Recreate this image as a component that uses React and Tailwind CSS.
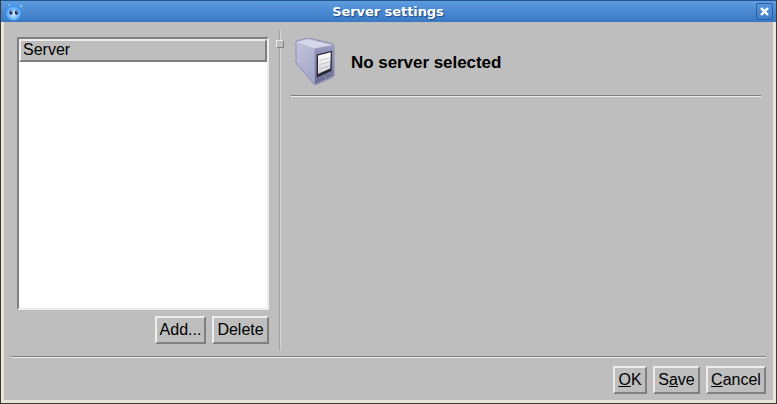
const sans = "font-['Liberation_Sans',Arial,sans-serif]";

function Btn({ width, children }) {
  return (
    <button
      className={`${width} h-[28px] flex items-center justify-center bg-[#bebebe] border-2 border-t-[#ededed] border-l-[#ededed] border-r-[#7f7f7f] border-b-[#7f7f7f] text-[16px] leading-none text-black`}
    >
      {children}
    </button>
  );
}

function AppIcon() {
  return (
    <svg width="20" height="20" viewBox="0 0 20 20">
      <defs>
        <radialGradient id="face" cx="0.5" cy="0.55" r="0.55">
          <stop offset="0" stopColor="#d8ecff" />
          <stop offset="0.55" stopColor="#7cc0ff" />
          <stop offset="1" stopColor="#2f92fa" />
        </radialGradient>
      </defs>
      <circle cx="9.5" cy="11" r="7.6" fill="url(#face)" />
      <circle cx="17" cy="4" r="1.2" fill="#8cc4ff" />
      <circle cx="5" cy="3" r="1" fill="#8cc4ff" />
      <ellipse cx="7" cy="10.5" rx="1.6" ry="2.2" fill="#1c2b52" />
      <ellipse cx="12.5" cy="10.5" rx="1.6" ry="2.2" fill="#1c2b52" />
      <circle cx="7.4" cy="9.6" r="0.6" fill="#fff" />
      <circle cx="12.9" cy="9.6" r="0.6" fill="#fff" />
    </svg>
  );
}

function ServerIcon() {
  return (
    <svg width="42" height="50" viewBox="0 0 42 50" className="shrink-0">
      <defs>
        <linearGradient id="side" x1="0" y1="0" x2="1" y2="1">
          <stop offset="0" stopColor="#c6c8e0" />
          <stop offset="1" stopColor="#9193ba" />
        </linearGradient>
        <linearGradient id="front" x1="0" y1="0" x2="0" y2="1">
          <stop offset="0" stopColor="#9a9cc2" />
          <stop offset="1" stopColor="#66688e" />
        </linearGradient>
        <linearGradient id="panel" x1="0" y1="0" x2="0" y2="1">
          <stop offset="0" stopColor="#ffffff" />
          <stop offset="1" stopColor="#d4d4da" />
        </linearGradient>
      </defs>
      <path d="M1 4 Q1 3 3 2.5 L12 0.5 Q14 0 16 0.5 L37 5.5 Q39 6 39 8 L39 37.5 Q39 38.5 37 39.5 L21 46.5 Q20 47 19 46 L2 26 Q1 25 1 24 Z" fill="url(#side)" stroke="#7b7da6" strokeWidth="0.7" />
      <path d="M2 4 L13 1.5 L38 7 L20 10.5 Z" fill="#d6d8ea" />
      <path d="M19.5 10.5 L38.5 7 L38.5 37.5 L20 46 Z" fill="url(#front)" />
      <path d="M21.7 16.5 L37 12.7 L36.4 33 L21.7 39.5 Z" fill="#262631" />
      <path d="M23 17.5 L35.8 14.2 L35.2 30.5 L23 36 Z" fill="url(#panel)" />
      <path d="M24.5 22.5 L34.5 20 M24.5 26.5 L34.5 24 M24.5 30.5 L34.5 28" stroke="#b0b0ba" strokeWidth="0.7" />
      <circle cx="30" cy="39" r="1" fill="#5fb08a" />
    </svg>
  );
}

export default function App() {
  return (
    <div className={`${sans} w-[777px] h-[404px] flex flex-col bg-[#e9e5d9] border-l border-b border-r border-[#3c3a36] text-black overflow-hidden`}>
      {/* title bar */}
      <div className="h-[22px] shrink-0 -mx-px flex items-center justify-between pl-[4px] pr-[4px] bg-gradient-to-b from-[#5c9ce0] to-[#3a78c4] border-t border-[#23528c]">
        <AppIcon />
        <span className="relative left-[-2px] font-['DejaVu_Sans',sans-serif] font-bold text-[13px] tracking-[-0.005em] text-white [text-shadow:1px_1px_1px_#1f4a80]">Server settings</span>
        <div className="w-[17px] h-[17px] flex items-center justify-center rounded-[2px] border border-[#2b5da0]">
          <svg width="11" height="11" viewBox="0 0 11 11">
            <path d="M2 2 L9 9 M9 2 L2 9" stroke="#fff" strokeWidth="2.4" />
          </svg>
        </div>
      </div>

      {/* window body */}
      <div className="flex-1 ml-[3px] mr-[3px] mb-[3px] bg-[#bebebe] flex flex-col pl-[7px] pr-[6px] min-h-0">
        <div className="flex h-[328px] shrink-0 pt-[8px]">
          {/* left pane */}
          <div className="w-[252px] ml-[6px] flex flex-col shrink-0 pt-[7px]">
            <div className="h-[273px] bg-white border-2 border-t-[#7f7f7f] border-l-[#7f7f7f] border-r-[#ededed] border-b-[#ededed]">
              <div className="h-[23px] flex items-center pl-[2px] pb-[1px] bg-[#bebebe] border-2 border-t-[#ededed] border-l-[#ededed] border-r-[#7f7f7f] border-b-[#7f7f7f] text-[16px] leading-none">
                Server
              </div>
            </div>
            <div className="flex justify-end gap-[6px] mt-[6px]">
              <Btn width="w-[51px]">Add...</Btn>
              <Btn width="w-[57px]">Delete</Btn>
            </div>
          </div>

          {/* splitter */}
          <div className="relative w-[2px] ml-[10px] mr-[10px] h-[320px] shrink-0 bg-gradient-to-r from-[#8a8a8a] to-[#ededed]">
            <div className="absolute left-[-3px] top-[10px] w-[8px] h-[8px] bg-[#bebebe] border border-t-[#ededed] border-l-[#ededed] border-r-[#7f7f7f] border-b-[#7f7f7f]" />
          </div>

          {/* right pane */}
          <div className="w-[470px] shrink-0">
            <div className="flex items-center h-[65px] pl-[4px] pt-[1px]">
              <ServerIcon />
              <span className="ml-[14px] font-bold text-[17px] leading-none relative top-[-1px] tracking-[-0.003em]">No server selected</span>
            </div>
            <div className="h-[2px] bg-gradient-to-b from-[#7f7f7f] from-50% to-[#ededed] to-50%" />
          </div>
        </div>

        {/* bottom */}
        <div className="h-[2px] mt-[-2px] bg-gradient-to-b from-[#7f7f7f] from-50% to-[#ededed] to-50% w-[755px] relative top-[8px]" />
        <div className="flex justify-end gap-[6px] mt-[16px] w-[755px]">
          <Btn width="w-[34px]"><span><span className="underline">O</span>K</span></Btn>
          <Btn width="w-[47px]"><span>S<span className="underline">a</span>ve</span></Btn>
          <Btn width="w-[60px]"><span><span className="underline">C</span>ancel</span></Btn>
        </div>
      </div>
    </div>
  );
}
